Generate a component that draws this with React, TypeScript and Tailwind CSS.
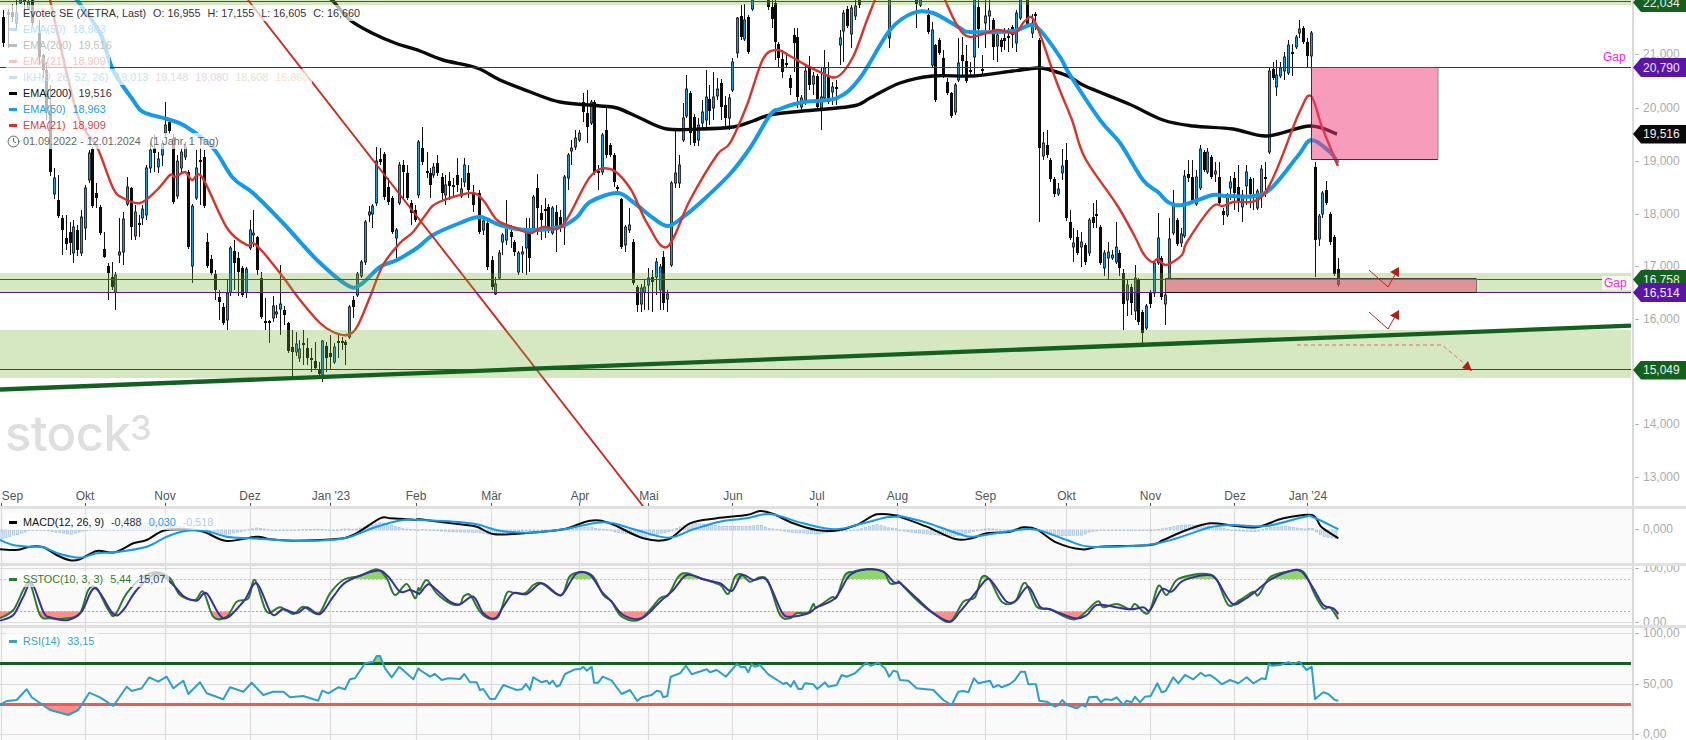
import React from 'react';
import { Clock } from 'lucide-react';

type Pt = [number, number];

// [x, bodyTop, bodyBottom, up, wickTop?, wickBottom?]
const CANDLES: number[][] = [
  [3,17,43,0,10,47],[8,12,15,0,9,48],[12,12,17,0,4,22],[16,13,23,1,0,28],[20,0,3,1,0,4],[24,0,2,0],[28,2,8,1],[32,0,23,0],[39,33,57,0,20,65],[43,55,70,0],[46,70,110,0],
  [50,110,172,0,85,176],[54,178,194,1,168,199],[58,200,216,0,175,218],[62,218,230,0,215,255],[66,238,244,0,215,250],[70,232,243,0,222,255],[73,227,253,1,220,263],[77,230,250,0,225,256],[81,217,253,1,210,256],[85,188,228,1,185,240],[89,153,180,1,150,183],[92,149,206,0,147,208],[96,193,198,0,183,208],[100,207,233,0,205,235],[104,249,257,0,232,258],[108,266,273,0,263,300],[112,277,287,0,262,290],[115,275,292,1,272,310],[119,252,255,1,218,263],[123,219,252,1,212,265],[127,187,204,1,177,206],[131,188,227,0,187,240],[135,212,236,1,205,240],[139,223,225,0,215,237],[142,209,218,1,205,225],[146,168,215,1,165,220],[150,150,168,1,142,173],[154,148,153,0,135,172],[158,159,167,1,152,173],[162,144,155,1,140,166],[165,125,133,1,102,137],[169,122,131,0,118,134],[173,138,202,0,134,204],[177,161,196,1,155,199],[181,152,168,1,148,172],[185,147,157,1,142,160],[188,172,247,0,170,249],[192,206,266,1,204,283],[196,168,198,1,150,200],[200,160,162,0,148,205],[204,157,206,0,150,208],
  [207,242,266,0,233,268],[211,259,273,0,255,275],[215,274,290,0,270,300],[219,297,302,0,290,320],[223,307,323,0,303,325],[227,293,320,1,280,330],[230,248,292,1,246,296],[234,251,263,0,240,290],[238,258,272,0,252,296],[242,268,295,0,266,297],[246,269,292,1,267,298],[250,230,248,1,220,250],[253,233,235,1,210,247],[257,237,270,0,236,275],[261,278,317,0,272,319],[265,321,323,0,298,330],[269,321,323,0,320,343],[273,306,318,1,296,322],[276,312,314,1,305,318],[280,304,309,1,265,335],[284,310,315,0,306,325],[288,323,351,0,322,353],[292,347,352,0,330,377],[296,344,352,1,332,356],[299,349,358,1,340,362],[303,343,345,0,330,365],[307,348,358,0,338,365],[311,358,360,0,348,372],[315,361,368,0,342,370],[319,369,374,0,362,378],[322,341,375,1,340,382],[326,346,358,0,342,372],[330,353,357,0,335,370],[334,347,362,1,343,364],[338,341,343,0,335,358],[342,341,343,0,337,350],[345,342,345,0,340,365],[349,307,337,1,305,339],[353,300,307,0,296,318],[357,274,295,1,272,297],[361,262,276,1,260,278],[365,222,262,1,220,265],[369,212,215,1,206,222],[372,206,214,1,204,228],[376,161,203,1,147,206],[380,159,162,0,148,165],[384,154,197,0,152,200],[388,187,202,0,178,205],[392,198,232,0,196,234],[396,230,238,1,228,258],[399,165,203,1,162,205],[403,165,172,0,160,200],[407,173,198,0,165,200],[411,203,213,0,200,225],[415,210,220,0,205,222],
  [418,142,195,1,140,198],[422,148,162,0,127,165],[427,171,173,0,152,178],[430,173,185,0,168,198],[433,167,175,1,163,178],[437,163,173,0,155,176],[442,177,193,0,173,200],[445,185,195,1,175,205],[449,181,186,0,172,200],[453,185,187,0,178,198],[457,175,185,0,158,192],[461,189,196,1,178,198],[464,165,182,1,158,187],[468,173,190,0,165,198],[473,193,205,0,185,212],[479,193,232,0,190,234],[483,221,230,1,218,235],[487,223,267,0,220,270],[492,260,287,0,256,290],[495,284,294,1,277,295],[499,253,278,1,250,280],[502,235,242,1,233,255],[506,227,240,1,200,245],[511,232,237,0,225,248],[514,242,252,0,240,256],[518,253,272,1,251,275],[522,252,254,1,246,273],[526,232,248,1,218,275],[529,232,258,0,218,272],[533,197,228,1,195,232],[537,188,208,0,174,235],[541,213,220,0,205,240],[545,209,211,0,198,238],[548,207,230,0,204,233],[552,208,233,1,206,235],[556,212,230,0,205,252],[560,217,228,0,210,232],[564,177,227,1,175,245],[568,155,178,1,153,190],[571,148,151,1,140,165],[575,138,147,1,130,150],[579,133,140,1,130,142],[583,102,112,0,93,122],[587,113,127,0,90,143],[591,102,123,1,100,125],[594,102,173,0,100,175],[598,171,173,0,165,190],[602,135,172,1,133,175],[606,130,155,0,108,158],[610,145,155,0,143,157],[614,155,182,0,153,187],[617,187,189,0,185,195],[621,199,247,0,198,249],[625,227,245,1,225,252],[629,225,230,1,208,233],[633,242,283,0,239,285],[637,287,305,0,285,312],[641,288,304,1,284,312],[644,287,292,1,280,310],[648,278,285,1,268,310],[652,277,282,0,270,312],[656,262,277,1,258,295],[660,267,290,1,264,310],[663,257,303,0,251,310],[667,294,299,1,290,312],[671,183,265,1,181,267],[675,173,183,1,130,188],[679,165,183,1,155,188],[683,118,140,1,103,142],[686,89,116,1,75,118],[690,93,133,0,91,145],[694,117,143,0,114,146],[698,125,140,1,118,146],[702,112,123,1,100,130],[706,97,120,1,70,128],[709,99,111,0,85,125],[713,97,108,1,72,120],[717,89,96,1,78,100],[721,83,107,0,79,120],[725,105,118,0,96,128],[729,98,118,1,94,130],
  [732,62,90,1,58,92],[737,18,53,1,17,58],[741,16,37,0,5,40],[744,20,39,1,4,41],[748,17,52,0,15,54],[752,0,9,1,0,11],[768,0,7,0,0,10],[772,7,19,0,0,28],[775,3,42,0,0,60],[778,44,58,0,42,67],[782,59,72,0,50,78],[786,63,65,0,55,68],[790,78,88,0,75,95],[794,35,43,0,28,72],[797,37,97,0,28,108],[801,98,107,1,95,110],[805,71,100,1,66,105],[809,68,85,0,56,90],[813,76,84,1,72,95],[817,76,107,0,74,110],[821,97,108,1,68,130],[824,68,98,1,50,100],[828,76,102,0,62,104],[832,87,92,1,82,105],[836,87,89,0,80,105],[840,38,45,1,30,65],[843,13,31,1,10,62],[847,9,26,0,6,28],[851,8,34,1,5,48],[855,6,16,1,0,20],[859,0,5,0,0,8],[889,0,38,1,0,48],[916,0,4,0,0,28],[920,0,5,1,0,7],[928,15,32,0,8,34],[932,30,65,1,22,67],[935,45,100,0,44,102],[939,40,53,0,38,55],[943,58,76,0,50,78],[947,82,93,0,78,95],[951,93,116,0,92,118],[955,85,112,1,83,115],[958,63,80,1,38,82],[962,55,61,0,37,75],[966,61,81,0,45,83],[970,70,72,0,62,75],[974,0,57,1,0,75],[978,7,29,0,0,48],[982,69,71,0,55,75],[985,16,23,1,0,48],[989,11,16,1,0,30],[993,20,47,0,18,60],[997,35,46,1,32,62],[1001,40,47,0,38,52],[1004,38,41,0,28,50],[1008,36,38,0,28,52],[1012,27,35,0,25,48],[1016,13,43,1,10,52],[1020,0,18,1,0,20],[1027,0,24,0,0,26],[1032,23,33,1,14,38],[1035,14,16,0,12,30],
  [1039,40,148,0,38,222],[1043,143,156,1,132,160],[1047,145,155,0,130,158],[1050,160,179,0,158,182],[1054,179,194,0,177,197],[1058,189,194,1,183,196],[1062,166,173,1,149,180],[1066,160,218,0,143,221],[1070,222,238,0,210,240],[1073,243,247,1,228,262],[1077,237,253,0,230,255],[1081,242,247,1,232,267],[1085,245,262,0,243,265],[1089,220,253,1,218,256],[1093,217,223,0,203,228],[1096,214,216,0,200,228],[1100,227,263,0,225,265],[1104,253,268,1,250,276],[1108,252,258,1,242,280],[1112,255,258,1,250,260],[1116,247,262,1,222,264],[1119,253,268,0,250,276],[1123,273,304,0,269,330],[1127,285,300,1,280,316],[1131,287,303,0,284,315],[1135,278,311,1,265,320],[1138,280,322,0,278,325],[1142,312,333,0,310,343],[1146,306,328,1,304,330],[1150,292,304,0,290,308],[1154,263,293,1,262,297],[1158,238,263,1,213,265],[1161,258,297,0,256,300],[1165,295,304,1,293,325],[1169,239,278,1,218,280],[1173,203,233,1,190,235],[1177,220,244,0,218,246],[1181,234,243,1,228,247],[1184,176,236,1,170,238],[1188,174,178,0,160,182],[1192,177,201,0,160,203],[1196,177,204,1,170,206],[1200,149,188,1,145,190],[1204,152,170,0,150,172],[1207,152,172,1,148,174],[1211,157,177,0,155,179],[1215,171,174,1,162,182],[1219,177,203,0,162,205],[1223,211,215,0,208,225],[1227,195,215,1,193,217],[1230,182,188,1,176,200],[1234,178,193,0,172,210],[1238,187,202,0,165,212],[1242,195,207,1,190,222],[1246,172,186,1,165,205],[1250,179,194,0,177,208],[1253,195,197,0,178,210],[1257,191,208,1,189,210],[1261,169,193,1,165,208],[1265,177,179,0,162,197],
  [1269,71,152,1,68,154],[1273,69,78,0,62,80],[1276,75,87,1,60,96],[1280,68,76,1,62,78],[1284,57,71,1,52,80],[1288,45,73,1,40,75],[1292,52,54,0,44,76],[1296,37,47,1,35,49],[1299,29,33,1,20,38],[1303,28,42,0,26,44],[1307,42,56,0,38,67],[1311,33,56,1,31,67],[1315,167,240,0,162,277],[1319,216,239,1,214,246],[1322,193,214,1,191,218],[1326,190,203,0,181,205],[1330,214,242,0,212,245],[1334,237,274,0,235,276],[1338,269,285,0,258,287],
];

const EMA200: Pt[] = [[325,-5],[333,1],[350,20],[372,33],[395,43],[420,51],[443,60],[477,68],[500,80],[533,93],[560,102],[600,106],[617,108],[640,118],[667,129],[700,129],[733,127],[753,121],[770,115],[803,111],[853,106],[870,98],[900,83],[933,76],[973,76],[1013,71],[1037,68],[1050,70],[1070,77],[1085,86],[1129,104],[1163,120],[1193,126],[1233,129],[1267,136],[1310,126],[1337,134]];

const EMA50: Pt[] = [[70,-10],[77,0],[100,33],[113,70],[133,100],[143,112],[167,119],[185,126],[213,148],[233,178],[253,193],[283,223],[317,260],[347,285],[360,285],[380,267],[397,260],[417,248],[433,235],[460,223],[480,217],[500,225],[527,230],[560,227],[577,217],[590,202],[617,193],[633,202],[653,218],[668,226],[683,217],[700,203],[730,174],[750,148],[770,115],[780,109],[803,102],[837,98],[860,78],[890,30],[913,13],[933,13],[960,28],[970,32],[1013,31],[1030,25],[1040,30],[1060,57],[1070,75],[1100,120],[1120,143],[1143,180],[1158,192],[1168,202],[1182,205],[1213,195],[1227,196],[1265,193],[1297,157],[1311,140],[1330,152],[1338,163]];

const EMA21: Pt[] = [[48,-5],[50,0],[77,113],[97,147],[113,188],[123,198],[140,203],[157,190],[170,175],[175,177],[185,172],[192,180],[202,177],[227,228],[247,245],[253,243],[263,252],[283,277],[300,300],[320,323],[333,332],[347,335],[357,327],[370,297],[383,265],[400,243],[413,232],[427,213],[437,203],[470,193],[483,200],[497,220],[513,227],[530,233],[543,227],[563,225],[590,177],[610,169],[630,188],[647,223],[667,247],[690,200],[717,155],[730,143],[747,105],[763,59],[777,50],[790,56],[802,63],[820,72],[837,77],[853,57],[867,20],[875,0],[880,-10],[940,-10],[945,0],[957,25],[970,37],[997,30],[1015,33],[1025,21],[1035,22],[1057,83],[1072,120],[1085,158],[1117,205],[1135,237],[1143,253],[1152,262],[1158,259],[1166,265],[1182,255],[1187,242],[1212,207],[1223,206],[1233,202],[1265,193],[1299,113],[1311,96],[1322,127],[1338,166]];

const z = (x0: number, y0: number, a: number[]): Pt[] => {
  const out: Pt[] = [];
  for (let i = 0; i < a.length; i += 2) out.push([x0 + a[i] / 3, y0 + a[i + 1] / 3]);
  return out;
};

const MACD: Pt[] = [
  ...z(0,490,[0,178,50,180,90,170,130,172,170,195,210,211,240,208,290,183,345,187,400,160,440,150,490,122,550,118,610,125,680,153,770,140,810,148,880,152,1000,148,1060,135,1140,85,1170,85,1210,87,1255,90]),
  ...z(420,490,[0,88,120,103,170,110,225,133,330,128,430,118,510,92,570,100,670,145,745,148,810,100,890,85,980,75,1020,63,1060,72,1120,100,1190,120,1245,122,1310,105,1370,73,1435,77]),
  ...z(900,490,[0,80,80,110,165,147,215,145,260,130,330,125,370,112,410,118,470,158,545,178,600,170,750,165,790,150,860,120,930,100,1000,107,1070,112,1150,85,1235,75,1265,112,1315,145]),
];
const SIGNAL: Pt[] = [
  ...z(0,490,[0,150,40,165,90,170,130,172,180,192,240,203,290,190,345,187,440,170,500,140,560,122,620,124,680,140,750,145,880,152,950,152,1040,143,1130,110,1210,90,1255,90]),
  ...z(420,490,[0,90,100,95,170,103,240,122,330,128,430,118,530,98,580,100,650,120,745,143,820,118,900,95,980,85,1050,72,1150,100,1245,118,1330,100,1400,82,1435,80]),
  ...z(900,490,[0,78,80,98,180,133,220,140,300,128,400,118,500,150,570,170,740,165,830,145,930,112,1000,105,1100,108,1215,80,1240,82,1315,118]),
];
const STOCK: Pt[] = [
  ...z(0,490,[0,385,40,360,70,300,90,280,120,375,150,385,200,385,240,370,265,300,290,295,325,360,345,375,380,310,430,260,470,247,510,265,540,315,585,330,610,305,640,380,680,380,710,335,745,325,765,270,800,365,840,352,880,372,910,350,955,372,990,310,1030,270,1080,258,1130,238,1160,265,1185,315,1220,282,1245,325,1255,295]),
  ...z(420,490,[0,300,20,270,50,310,90,340,120,343,130,320,150,315,180,365,205,385,235,380,260,310,280,308,315,310,340,285,365,280,410,312,430,310,450,258,490,247,520,260,550,315,575,335,605,380,660,388,720,325,745,315,775,260,800,250,850,268,900,285,925,312,945,260,965,253,990,275,1020,262,1045,275,1080,375,1110,385,1130,370,1165,368,1180,342,1190,352,1235,322,1250,322,1275,255,1300,245,1340,238,1390,245,1410,280,1435,278]),
  ...z(900,490,[0,278,50,330,100,370,150,395,190,335,225,322,245,262,270,270,305,335,345,335,375,278,410,350,450,358,525,388,590,335,610,352,650,342,690,358,705,342,745,370,775,288,800,315,830,270,875,255,920,252,950,268,985,345,1020,330,1060,305,1075,315,1110,262,1160,245,1210,245,1245,315,1270,355,1290,352,1315,388]),
];
const STOCK_D: Pt[] = [
  ...z(0,490,[0,392,40,375,70,320,95,280,130,365,150,382,205,390,245,365,285,295,340,372,370,360,410,300,470,250,520,285,550,318,590,332,620,310,670,385,730,335,770,280,815,372,850,358,890,370,920,352,960,372,1000,320,1040,275,1130,242,1165,260,1200,305,1230,300,1255,310]),
  ...z(420,490,[0,310,25,283,50,300,90,335,120,343,160,320,190,370,225,385,250,350,280,310,320,312,365,280,410,312,430,310,470,250,510,255,545,305,575,335,610,375,665,385,720,335,760,300,800,255,850,268,900,280,935,303,965,255,1000,270,1040,270,1085,365,1110,380,1165,370,1190,352,1245,325,1290,255,1340,238,1390,245,1420,275,1435,278]),
  ...z(900,490,[0,278,50,325,100,370,150,395,180,365,225,310,260,268,280,280,320,335,350,330,385,290,420,350,450,358,525,385,560,375,590,345,640,350,690,358,730,352,750,360,785,298,815,305,850,272,920,255,950,270,995,340,1030,330,1060,310,1110,270,1170,243,1205,245,1240,295,1270,345,1300,355,1315,372]),
];
const RSI: Pt[] = [
  ...z(0,490,[0,645,20,633,50,630,80,598,95,622,150,660,205,675,235,660,268,608,300,622,340,648,380,590,395,603,425,595,448,562,475,575,500,560,520,595,550,572,565,612,600,577,620,610,670,628,690,592,730,605,755,578,790,615,820,605,850,605,870,622,910,618,955,632,967,602,985,610,1015,592,1035,598,1050,568,1065,565,1095,520,1120,515,1130,498,1140,498,1155,535,1175,562,1198,530,1240,568,1255,535]),
  ...z(420,490,[0,540,30,560,45,552,65,570,85,565,120,567,133,552,150,577,170,577,180,600,190,597,210,627,225,627,250,585,290,600,305,598,318,582,330,600,340,562,365,577,380,572,388,582,398,572,410,590,420,585,435,552,465,538,480,538,490,530,500,542,515,530,522,578,535,578,548,560,575,572,605,612,630,600,652,633,665,622,695,615,710,602,722,605,730,622,742,618,752,560,780,550,798,527,815,553,860,538,870,547,890,540,918,560,950,522,965,532,975,530,985,547,995,522,1005,530,1020,525,1045,553,1090,582,1100,578,1112,590,1122,573,1135,597,1145,597,1155,580,1180,583,1192,597,1215,577,1225,590,1250,585,1265,555,1280,560,1305,550,1338,518,1352,527,1375,518,1395,535,1408,560,1420,542,1432,545]),
  ...z(900,490,[0,570,25,572,50,595,100,600,130,630,155,645,175,605,190,603,205,607,222,565,235,580,270,572,280,592,295,585,305,592,330,582,345,570,362,545,375,545,385,583,408,583,418,632,440,635,465,650,475,645,487,630,500,645,530,655,545,645,557,650,567,622,590,620,603,637,615,628,635,630,650,622,670,645,680,632,695,637,705,620,720,637,735,620,752,618,772,580,785,607,797,603,820,562,835,580,855,555,880,568,902,548,915,558,930,555,945,565,965,583,990,570,1015,580,1040,562,1060,580,1085,565,1097,568,1107,522,1115,527,1140,525,1165,517,1180,522,1198,515,1220,540,1235,530,1245,627,1270,607,1285,612,1305,630,1315,632]),
];

const MONTHS: { label: string; x: number }[] = [
  { label: 'Sep', x: 12.5 },
  { label: 'Okt', x: 85 },
  { label: 'Nov', x: 165 },
  { label: 'Dez', x: 250 },
  { label: "Jan '23", x: 331 },
  { label: 'Feb', x: 416 },
  { label: 'Mär', x: 491.5 },
  { label: 'Apr', x: 580 },
  { label: 'Mai', x: 649 },
  { label: 'Jun', x: 733 },
  { label: 'Jul', x: 817 },
  { label: 'Aug', x: 897.5 },
  { label: 'Sep', x: 985.5 },
  { label: 'Okt', x: 1066.5 },
  { label: 'Nov', x: 1150.5 },
  { label: 'Dez', x: 1235 },
  { label: "Jan '24", x: 1308 },
];
const TICKS = [1.5, 85.5, 165.5, 250.5, 330.5, 416.5, 491.5, 579.5, 648.5, 732.5, 817.5, 897.5, 985.5, 1066.5, 1150.5, 1234.5, 1307.5];

// histogram has one bar per trading day
const DAYS = Array.from({ length: 347 }, (_, i) => 1.5 + i * 3.855);

const path = (pts: Pt[]) => 'M' + pts.map((p) => `${p[0].toFixed(1)} ${p[1].toFixed(1)}`).join('L');

// catmull-rom through the points, the averages are smooth lines in the picture
const smooth = (pts: Pt[]) => {
  let d = `M${pts[0][0].toFixed(1)} ${pts[0][1].toFixed(1)}`;
  for (let i = 0; i < pts.length - 1; i++) {
    const p0 = pts[Math.max(i - 1, 0)];
    const p1 = pts[i];
    const p2 = pts[i + 1];
    const p3 = pts[Math.min(i + 2, pts.length - 1)];
    const c1x = p1[0] + (p2[0] - p0[0]) / 6;
    const c1y = p1[1] + (p2[1] - p0[1]) / 6;
    const c2x = p2[0] - (p3[0] - p1[0]) / 6;
    const c2y = p2[1] - (p3[1] - p1[1]) / 6;
    d += `C${c1x.toFixed(1)} ${c1y.toFixed(1)} ${c2x.toFixed(1)} ${c2y.toFixed(1)} ${p2[0].toFixed(1)} ${p2[1].toFixed(1)}`;
  }
  return d;
};

const valueAt = (pts: Pt[], x: number) => {
  for (let i = 1; i < pts.length; i++) {
    if (x <= pts[i][0]) {
      const [x0, y0] = pts[i - 1];
      const [x1, y1] = pts[i];
      return y0 + ((y1 - y0) * (x - x0)) / (x1 - x0 || 1);
    }
  }
  return pts[pts.length - 1][1];
};

const area = (d: string, pts: Pt[], level: number) =>
  `${d}L${pts[pts.length - 1][0]} ${level}L${pts[0][0]} ${level}Z`;

const Candles = () => (
  <g>
    {CANDLES.map(([x, t, b, up, wt, wb], i) => (
      <g key={i}>
        <line
          x1={x + 0.5}
          x2={x + 0.5}
          y1={wt ?? t - (((i * 7) % 9) + 1)}
          y2={wb ?? b + (((i * 13) % 11) + 1)}
          stroke="#111"
          strokeWidth={1}
        />
        {up ? (
          <rect x={x - 0.6} y={t} width={2.2} height={b - t} fill="#1e96e6" stroke="#111" strokeWidth={0.8} />
        ) : (
          <rect x={x - 1} y={t} width={3} height={b - t} fill="#0a0a0a" />
        )}
      </g>
    ))}
  </g>
);

const Tag = ({ y, value, color }: { y: number; value: string; color: string }) => (
  <div
    className={`absolute -left-[1px] flex h-[19px] w-[54px] items-center pl-[10px] text-xs leading-4 text-[#eeeeee] [clip-path:polygon(0_50%,8px_0,100%_0,100%_100%,8px_100%)] ${color}`}
    style={{ top: y - 9.5 }}
  >
    {value}
  </div>
);

const AxisLabel = ({ y, value }: { y: number; value: string }) => (
  <>
    <div className="absolute left-[1px] h-px w-[4px] bg-[#b5b5b5]" style={{ top: y }} />
    <div className="absolute left-[9px] text-xs leading-4 text-[#ababab]" style={{ top: y - 8 }}>
      {value}
    </div>
  </>
);

const Swatch = ({ color }: { color: string }) => <span className={`mr-[6px] h-[3px] w-2 ${color}`} />;

const LegendRow = ({ children }: { children: React.ReactNode }) => (
  <div className="flex h-4 items-center gap-[7px] bg-white/70 pl-[3px] pr-[4px] text-[10.8px] leading-4">{children}</div>
);

const Pane = ({
  top,
  height,
  labels,
  legend,
  children,
}: {
  top: number;
  height: number;
  labels: { y: number; value: string }[];
  legend: React.ReactNode;
  children: React.ReactNode;
}) => (
  <div className="flex w-full shrink-0 overflow-hidden" style={{ height }}>
    <div className="relative w-[1632px] shrink-0 bg-[#fafafa]">
      <svg className="block h-full w-full" viewBox={`0 ${top} 1632 ${height}`}>
        {TICKS.map((x) => (
          <line key={x} x1={x} x2={x} y1={top} y2={top + height} stroke="#dcdcdc" strokeWidth={1.2} />
        ))}
        {children}
      </svg>
      {legend}
    </div>
    <div className="relative flex-1 border-l-2 border-[#dadada] bg-white">
      {labels.map((l) => (
        <AxisLabel key={l.value} y={l.y - top} value={l.value} />
      ))}
    </div>
  </div>
);

const Bar = () => <div className="h-[3px] w-full shrink-0 bg-[#e0e0e0]" />;

const stochLine = smooth(STOCK);
const rsiLine = path(RSI);

export default function App() {
  return (
    <div className="flex h-[740px] w-[1686px] flex-col overflow-hidden bg-white font-['Liberation_Sans',Arial,sans-serif] text-[#333333]">
      {/* main price chart */}
      <div className="flex h-[506px] w-full shrink-0">
        <div className="relative w-[1632px] shrink-0">
          <svg className="block h-[506px] w-full" viewBox="0 0 1632 506">
            <Candles />
            <path d={smooth(EMA200)} fill="none" stroke="#0a0a0a" strokeWidth={3.4} strokeLinejoin="round" />
            <path d={smooth(EMA50)} fill="none" stroke="#149ae8" strokeWidth={4} strokeLinejoin="round" />
            <path d={smooth(EMA21)} fill="none" stroke="#d8342c" strokeWidth={2.4} strokeLinejoin="round" />
            <line x1={248} y1={0} x2={643} y2={506} stroke="#cc2a20" strokeWidth={1.9} />

            <rect x={0} y={0} width={1631} height={5} fill="#78b432" fillOpacity={0.3} />
            <rect x={0} y={273} width={1631} height={19} fill="#78b432" fillOpacity={0.3} />
            <rect x={0} y={330} width={1631} height={48} fill="#78b432" fillOpacity={0.3} />
            <line x1={0} x2={1631} y1={1.5} y2={1.5} stroke="#2f6b1d" strokeWidth={1} />
            <line x1={0} x2={1631} y1={279.5} y2={279.5} stroke="#2f6b1d" strokeWidth={1} />
            <line x1={0} x2={1631} y1={369.5} y2={369.5} stroke="#1f5f16" strokeWidth={1} />
            <line x1={0} x2={1631} y1={67.5} y2={67.5} stroke="#5a14a8" strokeWidth={1} />
            <line x1={0} x2={1631} y1={292.5} y2={292.5} stroke="#5a14a8" strokeWidth={1} />
            <line x1={0} y1={389.5} x2={1631} y2={325.7} stroke="#14601e" strokeWidth={4.3} />

            <rect x={1311.5} y={67.5} width={126.5} height={92} fill="#f03c78" fillOpacity={0.5} />
            <path d="M1311.5 68V159.5H1438" fill="none" stroke="#333" strokeWidth={1} />
            <path d="M1438 68V159.5" fill="none" stroke="#888" strokeWidth={1} />
            <rect x={1165.5} y={278.5} width={311} height={14} fill="#e25c7c" fillOpacity={0.6} />
            <path d="M1165.5 292.5V278.5H1476.5" fill="none" stroke="#444" strokeWidth={1} />
            <path d="M1476.5 278.5V292.5" fill="none" stroke="#777" strokeWidth={1} />
            <path d="M1165.5 292.5H1476.5" fill="none" stroke="#111" strokeWidth={1} />

            <path d="M1369 270L1388 287L1396 273" fill="none" stroke="#c0201a" strokeWidth={1} />
            <polygon points="1399,267 1390,272 1399,277" fill="#b81c14" />
            <path d="M1369 312L1388 329L1396 315" fill="none" stroke="#c0201a" strokeWidth={1} />
            <polygon points="1399,310 1390,315.5 1399,320" fill="#b81c14" />
            <path d="M1297 345H1442L1466 365" fill="none" stroke="#d9705f" strokeWidth={1} strokeDasharray="4 3" />
            <polygon points="1472,371 1462,368 1468,361" fill="#b81c14" />

            {TICKS.map((x) => (
              <line key={x} x1={x} x2={x} y1={503} y2={506} stroke="#555" strokeWidth={1} />
            ))}
          </svg>

          {/* legend */}
          <div className="absolute left-[6px] top-[5px] flex flex-col items-start">
            <LegendRow>
              <span className="ml-[14px]">Evotec SE (XETRA, Last)</span>
              <span>O: 16,955</span>
              <span>H: 17,155</span>
              <span>L: 16,605</span>
              <span>C: 16,660</span>
            </LegendRow>
            <LegendRow>
              <span className="flex items-center text-[#b8e0f9]">
                <Swatch color="bg-[#b8e0f9]" />
                EMA(50)
              </span>
              <span className="text-[#b8e0f9]">18,963</span>
            </LegendRow>
            <LegendRow>
              <span className="flex items-center text-[#bdbdbd]">
                <Swatch color="bg-[#bdbdbd]" />
                EMA(200)
              </span>
              <span className="text-[#bdbdbd]">19,516</span>
            </LegendRow>
            <LegendRow>
              <span className="flex items-center text-[#f5c4c2]">
                <Swatch color="bg-[#f5c4c2]" />
                EMA(21)
              </span>
              <span className="text-[#f5c4c2]">18,909</span>
            </LegendRow>
            <LegendRow>
              <span className="flex items-center text-[#c5e3ef]">
                <Swatch color="bg-[#c5e3ef]" />
                IKH(9, 26, 52, 26)
              </span>
              <span className="text-[#c5e3ef]">19,013</span>
              <span className="text-[#dcdcdc]">19,148</span>
              <span className="text-[#e6d2e6]">19,080</span>
              <span className="text-[#dfe3d2]">18,608</span>
              <span className="text-[#fbe4c4]">16,660</span>
            </LegendRow>
            <LegendRow>
              <span className="flex items-center text-[#111111]">
                <Swatch color="bg-[#000000]" />
                EMA(200)
              </span>
              <span className="text-[#333333]">19,516</span>
            </LegendRow>
            <LegendRow>
              <span className="flex items-center text-[#1e9be8]">
                <Swatch color="bg-[#1e9be8]" />
                EMA(50)
              </span>
              <span className="text-[#1e9be8]">18,963</span>
            </LegendRow>
            <LegendRow>
              <span className="flex items-center text-[#d8423a]">
                <Swatch color="bg-[#d8322a]" />
                EMA(21)
              </span>
              <span className="text-[#d8423a]">18,909</span>
            </LegendRow>
            <div className="flex h-4 items-center gap-[9px] bg-white/70 pl-[1px] pr-1 text-[10.8px] leading-4 text-[#666666]">
              <span className="flex items-center gap-[3px]">
                <Clock size={13} strokeWidth={1.5} className="text-[#444444]" />
                01.09.2022 - 12.01.2024
              </span>
              <span>(1 Jahr, 1 Tag)</span>
            </div>
          </div>

          <div className="absolute left-[1603px] top-[49px] text-xs leading-4 text-[#ff22dd]">Gap</div>
          <div className="absolute left-[1602px] top-[276px] bg-[#f4f9ee] pl-[2px] pr-[4px] text-xs leading-[14px] text-[#ff22dd]">
            Gap
          </div>

          {/* stock3 watermark */}
          <div className="absolute left-[5px] top-[404px] flex items-start font-['Inter',sans-serif] font-medium text-[#dedede]">
            <span className="text-[49px] leading-[60px] tracking-[-0.5px]">stock</span>
            <span className="mt-[5px] text-[34px] leading-[38px]">3</span>
          </div>

          {/* month labels */}
          {MONTHS.map((m) => (
            <div
              key={m.label + m.x}
              className="absolute top-[488px] -translate-x-1/2 whitespace-nowrap text-xs leading-4 text-[#555555]"
              style={{ left: m.x }}
            >
              {m.label}
            </div>
          ))}
        </div>

        <div className="relative flex-1 border-l-2 border-[#dadada] bg-white">
          <AxisLabel y={54} value="21,000" />
          <AxisLabel y={108} value="20,000" />
          <AxisLabel y={161} value="19,000" />
          <AxisLabel y={214} value="18,000" />
          <AxisLabel y={266} value="17,000" />
          <AxisLabel y={319} value="16,000" />
          <AxisLabel y={424} value="14,000" />
          <AxisLabel y={477} value="13,000" />
          <Tag y={2.5} value="22,034" color="bg-[#14601e]" />
          <Tag y={67.5} value="20,790" color="bg-[#5a14a8]" />
          <Tag y={134} value="19,516" color="bg-[#0a0a0a]" />
          <Tag y={279.5} value="16,758" color="bg-[#14601e]" />
          <Tag y={292.5} value="16,514" color="bg-[#5a14a8]" />
          <Tag y={370} value="15,049" color="bg-[#14601e]" />
        </div>
      </div>

      <Bar />

      {/* MACD */}
      <Pane
        top={509}
        height={54}
        labels={[{ y: 529, value: '0,000' }]}
        legend={
          <div className="absolute left-[6px] top-[5px]">
            <LegendRow>
              <span className="flex items-center text-[#111111]">
                <Swatch color="bg-[#000000]" />
                MACD(12, 26, 9)
              </span>
              <span>-0,488</span>
              <span className="text-[#1e9be8]">0,030</span>
              <span className="text-[#b5cbe3]">-0,518</span>
            </LegendRow>
          </div>
        }
      >
        {DAYS.map((x) => {
          const d = valueAt(MACD, x) - valueAt(SIGNAL, x);
          const h = Math.abs(d);
          return (
            <rect
              key={x}
              x={x - 0.5}
              y={d > 0 ? 530 : 530 - h}
              width={2}
              height={Math.max(h, 0.4)}
              fill="#e4ecf5"
              stroke="#a9c4e0"
              strokeWidth={0.9}
            />
          );
        })}
        <path d={smooth(MACD)} fill="none" stroke="#0a0a0a" strokeWidth={2} strokeLinejoin="round" />
        <path d={smooth(SIGNAL)} fill="none" stroke="#149ae8" strokeWidth={2} strokeLinejoin="round" />
      </Pane>

      <Bar />

      {/* Slow stochastic */}
      <Pane
        top={566}
        height={59}
        labels={[
          { y: 568, value: '100,00' },
          { y: 622, value: '0,00' },
        ]}
        legend={
          <div className="absolute left-[6px] top-[5px]">
            <LegendRow>
              <span className="flex items-center text-[#2a7d2a]">
                <Swatch color="bg-[#2a7d2a]" />
                SSTOC(10, 3, 3)
              </span>
              <span className="text-[#2a7d2a]">5,44</span>
              <span className="text-[#3a2f9e]">15,07</span>
            </LegendRow>
          </div>
        }
      >
        <defs>
          <clipPath id="stochHigh">
            <rect x={0} y={566} width={1632} height={13.3} />
          </clipPath>
          <clipPath id="stochLow">
            <rect x={0} y={611.3} width={1632} height={14} />
          </clipPath>
        </defs>
        <line x1={0} x2={1632} y1={568.5} y2={568.5} stroke="#dcdcdc" />
        <line x1={0} x2={1632} y1={622.5} y2={622.5} stroke="#dcdcdc" />
        <path d={area(stochLine, STOCK, 579.3)} fill="#92d36e" clipPath="url(#stochHigh)" />
        <path d={area(stochLine, STOCK, 611.3)} fill="#f98f8a" clipPath="url(#stochLow)" />
        <line x1={0} x2={1632} y1={579.5} y2={579.5} stroke="#b5d890" strokeDasharray="2 2" />
        <line x1={0} x2={1632} y1={611.5} y2={611.5} stroke="#ee9090" strokeDasharray="2 2" />
        <path d={stochLine} fill="none" stroke="#2a7d2a" strokeWidth={2} strokeLinejoin="round" />
        <path d={smooth(STOCK_D)} fill="none" stroke="#3a2f9e" strokeWidth={2} strokeLinejoin="round" />
      </Pane>

      <Bar />

      {/* RSI */}
      <Pane
        top={628}
        height={112}
        labels={[
          { y: 633, value: '100,00' },
          { y: 684, value: '50,00' },
          { y: 734, value: '0,00' },
        ]}
        legend={
          <div className="absolute left-[6px] top-[5px]">
            <LegendRow>
              <span className="flex items-center text-[#34a2cb]">
                <Swatch color="bg-[#34a2cb]" />
                RSI(14)
              </span>
              <span className="text-[#34a2cb]">33,15</span>
            </LegendRow>
          </div>
        }
      >
        <defs>
          <clipPath id="rsiHigh">
            <rect x={0} y={628} width={1632} height={35.3} />
          </clipPath>
          <clipPath id="rsiLow">
            <rect x={0} y={704.3} width={1632} height={36} />
          </clipPath>
        </defs>
        <line x1={0} x2={1632} y1={633.5} y2={633.5} stroke="#dcdcdc" />
        <line x1={0} x2={1632} y1={684.5} y2={684.5} stroke="#dcdcdc" />
        <line x1={0} x2={1632} y1={734.5} y2={734.5} stroke="#dcdcdc" />
        <path d={area(rsiLine, RSI, 663.3)} fill="#92d36e" clipPath="url(#rsiHigh)" />
        <path d={area(rsiLine, RSI, 704.3)} fill="#f98f8a" clipPath="url(#rsiLow)" />
        <line x1={0} x2={1631} y1={663.5} y2={663.5} stroke="#14601e" strokeWidth={3} />
        <line x1={0} x2={1631} y1={704.5} y2={704.5} stroke="#ee5a5a" strokeWidth={3} />
        <path d={rsiLine} fill="none" stroke="#2e9fc9" strokeWidth={2} strokeLinejoin="round" />
      </Pane>
    </div>
  );
}
